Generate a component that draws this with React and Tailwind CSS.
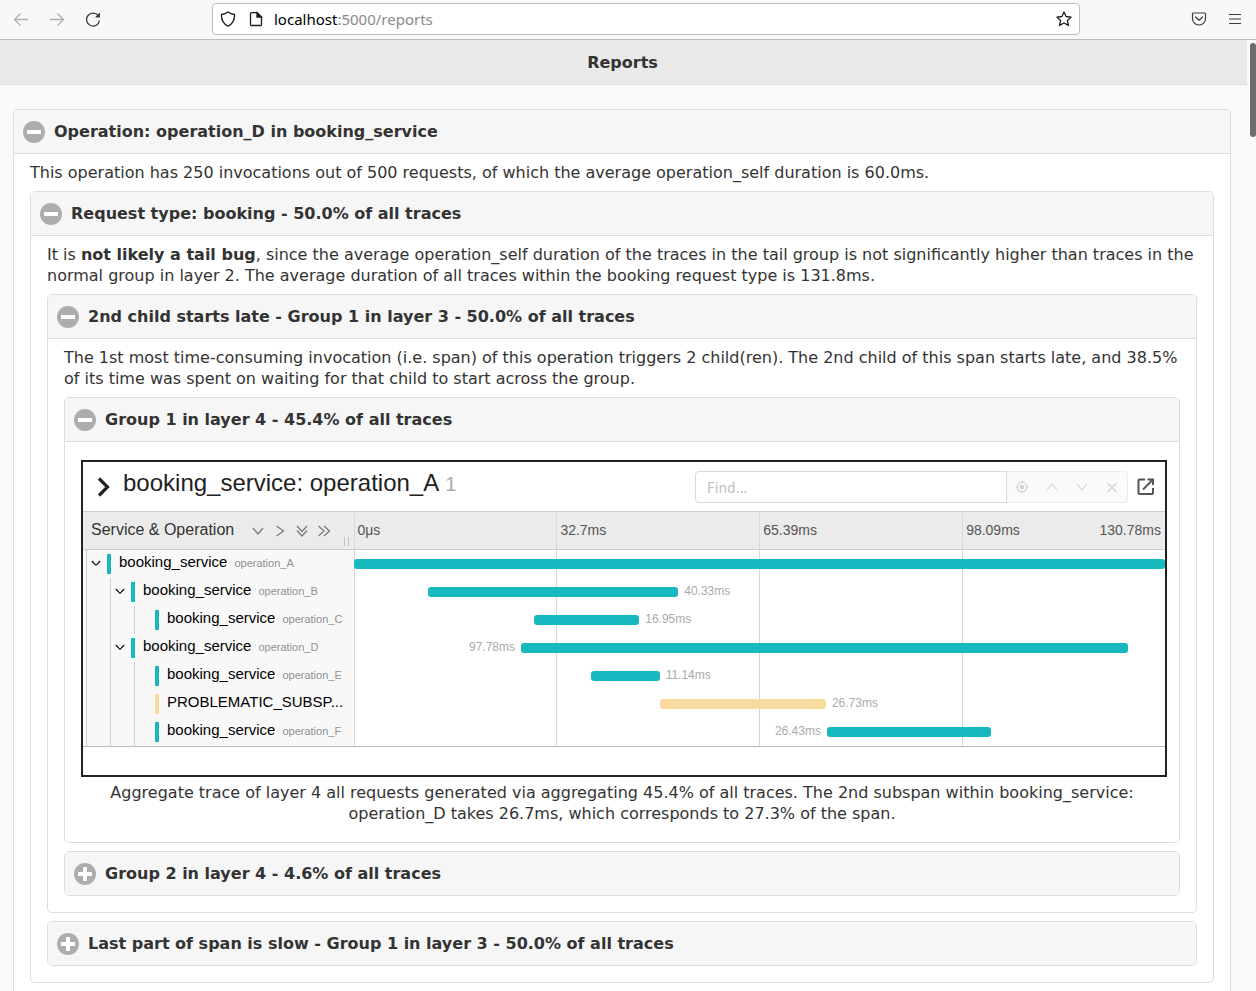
import { useId, useState } from "react";

const TOTAL_MS = 130.78;

const ticks = ["0μs", "32.7ms", "65.39ms", "98.09ms"];

const spans = [
  { id: "a", service: "booking_service", operation: "operation_A", depth: 0, parent: true, start: 0, ms: 130.78 },
  { id: "b", service: "booking_service", operation: "operation_B", depth: 1, parent: true, start: 12, ms: 40.33, label: "right" },
  { id: "c", service: "booking_service", operation: "operation_C", depth: 2, start: 29.1, ms: 16.95, label: "right" },
  { id: "d", service: "booking_service", operation: "operation_D", depth: 1, parent: true, start: 27, ms: 97.78, label: "left" },
  { id: "e", service: "booking_service", operation: "operation_E", depth: 2, start: 38.2, ms: 11.14, label: "right" },
  { id: "p", service: "PROBLEMATIC_SUBSP...", depth: 2, start: 49.4, ms: 26.73, label: "right", problem: true },
  { id: "f", service: "booking_service", operation: "operation_F", depth: 2, start: 76.3, ms: 26.43, label: "left" },
];

function Icon({ className, box = "0 0 16 16", width = 1, children }) {
  return (
    <svg className={className} viewBox={box} fill="none" stroke="currentColor" strokeWidth={width} aria-hidden="true">
      {children}
    </svg>
  );
}

function BrowserBar() {
  return (
    <div className="flex h-10 shrink-0 items-center border-b border-[#bdbdbd] bg-[#f8f8f8] pb-px text-[#3a3a42]">
      <div className="flex w-[212px] shrink-0 items-center gap-5 pl-[13px]">
        <button type="button" aria-label="Back" disabled className="text-[#b0b0b0]">
          <Icon className="size-4" width={1.3}>
            <path d="M15 8.500H1.500M7.500 2.500l-6 6 6 6" />
          </Icon>
        </button>
        <button type="button" aria-label="Forward" disabled className="text-[#b0b0b0]">
          <Icon className="size-4" width={1.3}>
            <path d="M1 8.500h13.500M8.500 2.500l6 6-6 6" />
          </Icon>
        </button>
        <button type="button" aria-label="Reload">
          <Icon className="size-4" width={1.3}>
            <path d="M13.300 4.700A6.500 6.500 0 1 0 14.500 9.500" />
            <path d="M15 1.500v5H10z" fill="currentColor" stroke="none" />
          </Icon>
        </button>
      </div>
      <div className="flex h-8 min-w-0 flex-1 items-center rounded border border-[#bcbcbc] bg-white pr-[7px] pl-[7px]">
        <Icon className="mr-3 size-4 shrink-0 text-[#1c1b22]" width={1.3}>
          <path d="M8 .9C6.200 2.400 4 3.200 1.400 3.500c-.1 5.200 1.900 9.400 6.600 11.700 4.700-2.300 6.700-6.500 6.600-11.700C12 3.200 9.800 2.400 8 .9z" strokeLinejoin="round" />
        </Icon>
        <Icon className="mr-2.5 size-4 shrink-0 text-[#1c1b22]" width={1.3}>
          <path d="M3.500 1.700h5.700l4.300 4.300v7.500a1 1 0 0 1-1 1h-9a1 1 0 0 1-1-1V2.700a1 1 0 0 1 1-1z" />
          <path d="M9 1.700v4.300h4.300z" fill="currentColor" />
        </Icon>
        <div className="min-w-0 flex-1 truncate font-['Noto_Sans',sans-serif] text-[15px] leading-5 text-[#8a8a8a]">
          <span className="text-black">localhost</span>:5000/reports
        </div>
        <button type="button" aria-label="Bookmark this page">
          <Icon className="size-4 text-[#1c1b22]" width={1.3}>
            <path d="M8 1l2.100 4.500 5 .6-3.700 3.300 1.100 5L8 12l-4.500 2.400 1.100-5L.9 6.100l5-.6z" strokeLinejoin="round" />
          </Icon>
        </button>
      </div>
      <div className="flex w-[176px] shrink-0 items-center justify-end gap-5 pr-[13px]">
        <button type="button" aria-label="Save to Pocket">
          <Icon className="size-4" width={1.2}>
            <path d="M2.500 2h11a1 1 0 0 1 1 1v4.500a6.500 6.500 0 0 1-13 0V3a1 1 0 0 1 1-1z" />
            <path d="M4.500 6L8 9.200 11.500 6" strokeLinecap="round" strokeLinejoin="round" />
          </Icon>
        </button>
        <button type="button" aria-label="Open menu">
          <Icon className="size-4" width={1.2}>
            <path d="M2 3.500h12M2 8h12M2 12.500h12" />
          </Icon>
        </button>
      </div>
    </div>
  );
}

function Collapsible({ title, open: initial = false, children }) {
  const [open, setOpen] = useState(initial);
  const id = useId();
  return (
    <section className="mt-2 overflow-hidden rounded-[5px] border border-[#dddddd] bg-white">
      <h2 className={open ? "border-b border-[#dddddd]" : ""}>
        <button
          type="button"
          aria-expanded={open}
          aria-controls={id}
          onClick={() => setOpen(!open)}
          className="flex w-full items-center gap-[9px] bg-[#f6f6f6] px-[9px] py-[11px] text-left leading-[21px] font-bold"
        >
          <svg className="-my-px size-[22px] shrink-0" viewBox="0 0 22 22" aria-hidden="true">
            <circle cx="11" cy="11" r="11" fill="#adadad" />
            <path d={open ? "M4 9h14v4H4z" : "M4 9h5V4h4v5h5v4h-5v5H9v-5H4z"} fill="#fff" />
          </svg>
          {title}
        </button>
      </h2>
      {open && <div id={id}>{children}</div>}
    </section>
  );
}

function GroupBody({ text, children }) {
  return (
    <div className="px-4 pt-2 pb-4">
      <p>{text}</p>
      {children}
    </div>
  );
}

function SearchBar() {
  const button = "flex flex-1 items-center justify-center";
  return (
    <div className="flex h-8 w-[433px] font-['Noto_Sans_CJK_SC',sans-serif] text-sm">
      <input
        type="text"
        aria-label="Find in trace"
        placeholder="Find..."
        className="min-w-0 flex-1 rounded-l border border-[#d9d9d9] bg-white px-[11px] outline-none placeholder:text-[#bfbfbf]"
      />
      <div className="flex w-[121px] rounded-r border border-l-0 border-[#ececec] bg-[#fafafa] text-[#d0d0d0]">
        <button type="button" aria-label="Locate" disabled className={button}>
          <Icon className="size-3.5" box="0 0 14 14" width={1.1}>
            <circle cx="7" cy="7" r="4.700" />
            <circle cx="7" cy="7" r="2.200" fill="currentColor" stroke="none" />
            <path d="M7 .8v2M7 11.200v2M.8 7h2M11.200 7h2" />
          </Icon>
        </button>
        <button type="button" aria-label="Previous match" disabled className={button}>
          <Icon className="size-3.5" box="0 0 14 14" width={1.1}>
            <path d="M2 10l5-6 5 6" />
          </Icon>
        </button>
        <button type="button" aria-label="Next match" disabled className={button}>
          <Icon className="size-3.5" box="0 0 14 14" width={1.1}>
            <path d="M2 4l5 6 5-6" />
          </Icon>
        </button>
        <button type="button" aria-label="Clear" disabled className={button}>
          <Icon className="size-3.5" box="0 0 14 14" width={1.1}>
            <path d="M2.500 3l9 9M11.500 3l-9 9" />
          </Icon>
        </button>
      </div>
    </div>
  );
}

function TreeRow({ span }) {
  return (
    <div className="flex h-7 pl-[3px]">
      {Array.from({ length: span.depth }, (_, i) => (
        <span key={i} className="w-6 shrink-0 border-l border-[#cccccc]" />
      ))}
      <span className="flex w-[21px] shrink-0 items-center border-l border-[#cccccc] pb-0.5 pl-[3px]">
        {span.parent && (
          <button type="button" aria-label={"Toggle children of " + span.operation}>
            <Icon className="size-3 text-black" box="0 0 12 12" width={1.1}>
              <path d="M1.800 4L6 8.300 10.200 4" />
            </Icon>
          </button>
        )}
      </span>
      <span className={"my-1 w-1 shrink-0 " + (span.problem ? "bg-[#f9dba0]" : "bg-[#17b8be]")} />
      <span className="pl-2 text-[15px] leading-6 whitespace-nowrap text-black">
        {span.service}
        {span.operation && <small className="pl-[7px] text-[11px] text-[#909090]">{span.operation}</small>}
      </span>
    </div>
  );
}

function TimelineRow({ span }) {
  return (
    <div className="flex h-7 items-center">
      <div
        className={"relative h-2.5 rounded-[3px] " + (span.problem ? "bg-[#f9dba0]" : "bg-[#17b8be]")}
        style={{ marginLeft: (span.start / TOTAL_MS) * 100 + "%", width: (span.ms / TOTAL_MS) * 100 + "%" }}
      >
        {span.label && (
          <span
            className={
              "absolute bottom-0 text-xs leading-3 text-[#aaaaaa] " +
              (span.label === "left" ? "right-full pr-1.5" : "left-full pl-1.5")
            }
          >
            {span.ms}ms
          </span>
        )}
      </div>
    </div>
  );
}

function Trace() {
  const nav = "flex size-[22px] items-center justify-center";
  return (
    <div className="-mr-1 border-2 border-[#222222] bg-white pb-7 text-left font-['Liberation_Sans',Arial,sans-serif]">
      <div className="flex items-center pt-[9px] pr-[9px] pb-2 pl-[10px]">
        <button type="button" aria-label="Show trace details">
          <Icon className="size-5 text-[#222222]" box="0 0 20 20" width={3.2}>
            <path d="M6 1.500L14.500 10 6 18.500" />
          </Icon>
        </button>
        <h3 className="flex min-w-0 flex-1 items-baseline gap-1.5 pb-2 pl-2.5 text-2xl leading-6 whitespace-nowrap text-[#222222]">
          <span>booking_service: operation_A</span>
          <span className="text-xl leading-5 text-[#aaaaaa]">1</span>
        </h3>
        <SearchBar />
        <a href="#trace" aria-label="Open trace in new window" className="ml-2 text-[#555555]">
          <Icon className="size-5" box="0 0 20 20" width={2}>
            <path d="M9 2.500H3.500a1 1 0 0 0-1 1V16a1 1 0 0 0 1 1H16a1 1 0 0 0 1-1V11M11.500 2.500H17V8M17 2.500l-10 10" />
          </Icon>
        </a>
      </div>
      <div className="flex border-y border-[#cccccc] bg-[#ebebeb]">
        <div className="flex h-[37px] w-1/4 items-center pl-2">
          <span className="mr-[13px] pb-0.5 text-base whitespace-nowrap text-[#333333]">Service &amp; Operation</span>
          <div className="flex flex-1 text-[#777777]">
            <button type="button" aria-label="Expand one level" className={nav}>
              <Icon className="size-3.5" box="0 0 14 14" width={1.2}>
                <path d="M2 4l5 6 5-6" />
              </Icon>
            </button>
            <button type="button" aria-label="Collapse one level" className={nav}>
              <Icon className="size-3.5" box="0 0 14 14" width={1.2}>
                <path d="M3.500 2l7 5-7 5" />
              </Icon>
            </button>
            <button type="button" aria-label="Expand all" className={nav}>
              <Icon className="size-3.5" box="0 0 14 14" width={1.2}>
                <path d="M2 2l5 5.500L12 2M2 6.500L7 12l5-5.500" />
              </Icon>
            </button>
            <button type="button" aria-label="Collapse all" className={nav}>
              <Icon className="size-3.5" box="0 0 14 14" width={1.2}>
                <path d="M1.500 2L7 7l-5.500 5M7 2l5.500 5L7 12" />
              </Icon>
            </button>
          </div>
          <span className="mr-[5px] mb-[3px] h-[9px] w-[5px] self-end border-x border-[#c4c4c4]" />
        </div>
        <div className="grid flex-1 grid-cols-4 text-sm text-[#555555]">
          {ticks.map((tick, i) => (
            <div key={tick} className="flex items-center justify-between border-l border-[#d8d8d8] pr-1 pb-px pl-[3px]">
              <span>{tick}</span>
              {i === 3 && <span>130.78ms</span>}
            </div>
          ))}
        </div>
      </div>
      <div className="flex border-b border-[#bbbbbb]">
        <div className="w-1/4 bg-[#f8f8f8]">
          {spans.map((span) => (
            <TreeRow key={span.id} span={span} />
          ))}
        </div>
        <div className="relative flex-1">
          <div className="absolute inset-0 grid grid-cols-4" aria-hidden="true">
            {ticks.map((tick) => (
              <div key={tick} className="border-l border-[#d8d8d8]" />
            ))}
          </div>
          {spans.map((span) => (
            <TimelineRow key={span.id} span={span} />
          ))}
        </div>
      </div>
    </div>
  );
}

export default function App() {
  return (
    <div className="flex h-screen flex-col overflow-hidden bg-[#f9f9f9] font-['DejaVu_Sans',sans-serif] text-base leading-[21px] text-[#333333]">
      <BrowserBar />
      <div className="flex min-h-0 flex-1">
        <div className="min-w-0 flex-1 overflow-hidden">
          <header className="border-b border-[#dddddd] bg-[#e9e9e9] pt-3 pr-0.5 pb-[11px] text-center">
            <h1 className="font-bold">Reports</h1>
          </header>
          <main className="pt-4 pr-4 pb-4 pl-[13px]">
            <Collapsible open title="Operation: operation_D in booking_service">
              <GroupBody text="This operation has 250 invocations out of 500 requests, of which the average operation_self duration is 60.0ms.">
                <Collapsible open title="Request type: booking - 50.0% of all traces">
                  <GroupBody
                    text={
                      <>
                        It is <b>not likely a tail bug</b>, since the average operation_self duration of the traces in the
                        tail group is not significantly higher than traces in the normal group in layer 2. The average
                        duration of all traces within the booking request type is 131.8ms.
                      </>
                    }
                  >
                    <Collapsible open title="2nd child starts late - Group 1 in layer 3 - 50.0% of all traces">
                      <GroupBody text="The 1st most time-consuming invocation (i.e. span) of this operation triggers 2 child(ren). The 2nd child of this span starts late, and 38.5% of its time was spent on waiting for that child to start across the group.">
                        <Collapsible open title="Group 1 in layer 4 - 45.4% of all traces">
                          <figure className="px-4 py-[18px] text-center">
                            <Trace />
                            <figcaption className="pt-[5px]">
                              Aggregate trace of layer 4 all requests generated via aggregating 45.4% of all traces. The 2nd
                              subspan within booking_service: operation_D takes 26.7ms, which corresponds to 27.3% of the
                              span.
                            </figcaption>
                          </figure>
                        </Collapsible>
                        <Collapsible title="Group 2 in layer 4 - 4.6% of all traces" />
                      </GroupBody>
                    </Collapsible>
                    <Collapsible title="Last part of span is slow - Group 1 in layer 3 - 50.0% of all traces" />
                  </GroupBody>
                </Collapsible>
              </GroupBody>
            </Collapsible>
          </main>
        </div>
        <div className="flex w-[9px] shrink-0 justify-end bg-[#fafafa] pt-[3px]" aria-hidden="true">
          <div className="h-[94px] w-1.5 rounded-full bg-[#6d6d6d]" />
        </div>
      </div>
    </div>
  );
}
